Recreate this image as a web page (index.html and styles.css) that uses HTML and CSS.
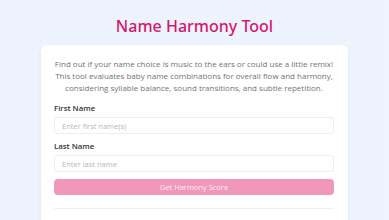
FILE: index.html
```html
<!DOCTYPE html>
<html lang="en">
<head>
    <meta charset="UTF-8">
    <meta name="viewport" content="width=device-width, initial-scale=1.0">
    <title>Name Harmony Tool</title>
    <link rel="stylesheet" href="styles.css">
</head>
<body>

    <div class="page">
        <h1>Name Harmony Tool</h1>

        <div class="card">
            <p class="intro">Find out if your name choice is music to the ears or could use a little remix! This tool evaluates baby name combinations for overall flow and harmony, considering syllable balance, sound transitions, and subtle repetition.</p>

            <label for="first">First Name</label>
            <input type="text" id="first" placeholder="Enter first name(s)">

            <label for="last">Last Name</label>
            <input type="text" id="last" placeholder="Enter last name">

            <button>Get Harmony Score</button>

            <hr class="divider">
        </div>
    </div>

</body>
</html>
```

FILE: styles.css
```css
body {
    font-family: 'Open Sans', sans-serif;
    margin: 0;
    padding: 0;
    background-color: #eef4fd;
    background-image: radial-gradient(#dde6f4 1px, transparent 1.2px);
    background-size: 16px 16px;
    background-position: 0 0;
    color: #333;
    overflow: hidden;
}
.page {
    width: 307px;
    margin: 0 auto;
    padding-top: 15px;
}
h1 {
    font-family: 'Noto Sans', sans-serif;
    font-size: 16px;
    font-weight: 500;
    color: #d3186f;
    text-align: center;
    margin: 0 0 8px;
    line-height: 22px;
}
.card {
    background: #fff;
    border-radius: 6px;
    padding: 13px 14px 20px 13px;
    box-shadow: 0 1px 4px rgba(120, 140, 180, 0.08);
}
.intro {
    font-size: 8px;
    line-height: 12px;
    color: #737373;
    text-align: center;
    margin: 0 0 9px;
}
label {
    display: block;
    font-size: 7.8px;
    font-weight: 600;
    color: #333;
    line-height: 10px;
    margin-bottom: 4px;
}
input {
    display: block;
    box-sizing: border-box;
    width: 100%;
    height: 17px;
    padding: 0 7px;
    font-family: 'Open Sans', sans-serif;
    font-size: 7.5px;
    border: 1px solid #eceef2;
    border-radius: 3px;
    margin: 0 0 7px;
    outline: none;
}
input::placeholder {
    color: #b8b8b8;
}
button {
    display: block;
    width: 100%;
    height: 16px;
    margin-top: 0;
    background: #f097ba;
    color: #fdeef4;
    font-family: 'Open Sans', sans-serif;
    font-size: 7.5px;
    border: none;
    border-radius: 4px;
    padding: 0;
}
.divider {
    border: none;
    border-top: 1px solid #eef0f3;
    margin: 13px 0 0;
}
```
